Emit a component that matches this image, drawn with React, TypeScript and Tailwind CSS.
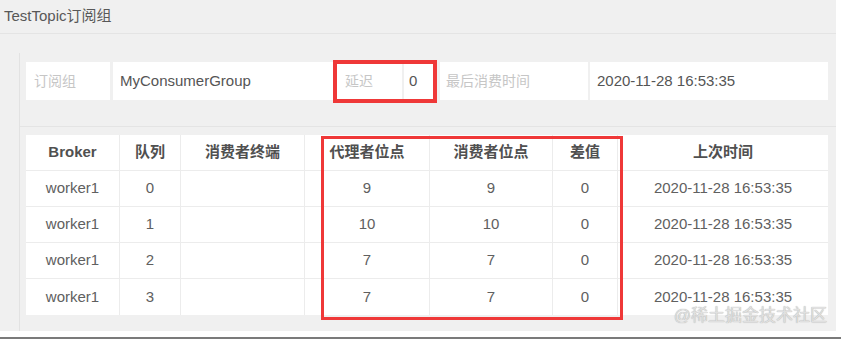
const font = { fontFamily: '"Liberation Sans", "Noto Sans CJK SC", sans-serif' }

const columns = [
  { title: 'Broker', width: 'w-[94px]' },
  { title: '队列', width: 'w-[61px]' },
  { title: '消费者终端', width: 'w-[124px]' },
  { title: '代理者位点', width: 'w-[125px]' },
  { title: '消费者位点', width: 'w-[123px]' },
  { title: '差值', width: 'w-[65px]' },
  { title: '上次时间', width: 'w-[210px]' },
]

const rows = [
  ['worker1', '0', '', '9', '9', '0', '2020-11-28 16:53:35'],
  ['worker1', '1', '', '10', '10', '0', '2020-11-28 16:53:35'],
  ['worker1', '2', '', '7', '7', '0', '2020-11-28 16:53:35'],
  ['worker1', '3', '', '7', '7', '0', '2020-11-28 16:53:35'],
]

function InfoCell({ label, className }: { label: string; className: string }) {
  return (
    <div className={`h-full bg-white flex items-center pl-[8px] text-[14px] text-[#c6c6c6] ${className}`}>
      {label}
    </div>
  )
}

function ValueCell({ value, className }: { value: string; className: string }) {
  return (
    <div className={`h-full bg-white flex items-center pl-[7px] text-[15px] text-[#555] ${className}`}>
      {value}
    </div>
  )
}

export default function App() {
  return (
    <div className="relative w-[841px] h-[339px] bg-white overflow-hidden" style={font}>
      <div className="w-[836px] h-[331px] bg-[#f0f0f0] flex flex-col">
        <div className="h-[34px] shrink-0 border-b border-[#e4e4e4] pl-[4px] pt-[7px] text-[15px] leading-[18px] text-[#585858]">
          TestTopic订阅组
        </div>

        <div className="mt-[19px] ml-[19px] flex-1 border-l border-[#e2e2e2] flex flex-col">
          <div className="h-[74px] shrink-0 border-b border-[#e4e4e4] pt-[9px] pl-[6px]">
            <div className="h-[38px] w-[802px] flex">
              <InfoCell label="订阅组" className="w-[84px]" />
              <ValueCell value="MyConsumerGroup" className="w-[220px] ml-[3px]" />
              <InfoCell label="延迟" className="w-[65px] ml-[4px]" />
              <ValueCell value="0" className="w-[29px] ml-[2px] !pl-[5px]" />
              <InfoCell label="最后消费时间" className="w-[148px] ml-[7px] !pl-[6px]" />
              <ValueCell value="2020-11-28 16:53:35" className="flex-1 ml-[2px]" />
            </div>
          </div>

          <div className="mt-[8px] ml-[6px] w-[802px] bg-white">
            <div className="h-[36px] flex border-b border-[#ececec]">
              {columns.map((c, i) => (
                <div
                  key={c.title}
                  className={`${c.width} flex items-center justify-center text-[15px] font-bold text-[#505050] ${i < columns.length - 1 ? 'border-r border-[#ececec]' : ''}`}
                >
                  {c.title}
                </div>
              ))}
            </div>
            {rows.map((r, ri) => (
              <div key={ri} className={`h-[36px] flex ${ri < rows.length - 1 ? 'border-b border-[#ececec]' : ''}`}>
                {r.map((v, i) => (
                  <div
                    key={i}
                    className={`${columns[i].width} flex items-center justify-center text-[15px] text-[#606060] ${i < columns.length - 1 ? 'border-r border-[#ececec]' : ''}`}
                  >
                    {v}
                  </div>
                ))}
              </div>
            ))}
          </div>
        </div>
      </div>

      <div className="absolute left-0 top-[337px] w-full h-[2px] bg-[#7a7a7a]" />

      <div className="absolute left-[333px] top-[60px] w-[104px] h-[43px] border-[4px] border-[#ef3838]" />
      <div className="absolute left-[321px] top-[136px] w-[302px] h-[184px] border-[3px] border-[#ef3838]" />

      <div className="absolute right-[14px] top-[305px] text-[17px] leading-[22px] text-[#e0e0e0] [text-shadow:0_0_1px_#9a9a9a]">
        @稀土掘金技术社区
      </div>
    </div>
  )
}
